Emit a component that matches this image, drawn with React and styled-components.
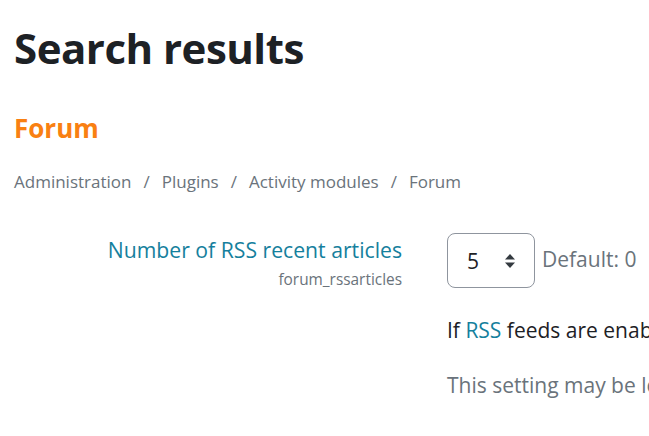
import styled, { createGlobalStyle } from "styled-components"

const GlobalStyle = createGlobalStyle`
* {
  margin: 0;
  padding: 0;
  box-sizing: border-box;
}
body {
  font-family: "Open Sans", "Noto Sans", sans-serif;
  background: #fff;
  color: #1d2125;
  overflow: hidden;
}
`

const Page = styled.div`
	padding: 22px 0 0 14px;
	width: 649px;
	height: 436px;
	overflow: hidden;
`

const Title = styled.h2`
	font-size: 42px;
	font-weight: 700;
	line-height: 52px;
	letter-spacing: -0.5px;
	color: #1d2125;
`

const Section = styled.h3`
	margin-top: 38px;
	font-size: 26px;
	font-weight: 700;
	line-height: 32px;
	color: #f98012;
`

const Crumbs = styled.nav`
	margin-top: 26px;
	display: flex;
	align-items: center;
	font-size: 17px;
	line-height: 24px;
	color: #6a737b;
`

const Sep = styled.span`
	padding: 0 12px;
`

const Setting = styled.div`
	margin-top: 39px;
	display: grid;
	grid-template-columns: 388px 1fr;
	column-gap: 45px;
	white-space: nowrap;
`

const LabelCol = styled.div`
	text-align: right;
	padding-top: 2px;
`

const Label = styled.div`
	font-size: 21.2px;
	line-height: 30px;
	color: #15809d;
`

const Key = styled.div`
	margin-top: 4px;
	font-size: 15.4px;
	line-height: 22px;
	color: #6a737b;
`

const ControlRow = styled.div`
	display: flex;
	align-items: center;
	gap: 7px;
`

const Select = styled.div`
	width: 88px;
	height: 55px;
	border: 1px solid #8f959e;
	border-radius: 8px;
	display: flex;
	align-items: center;
	justify-content: space-between;
	padding: 0 18px 0 19px;
	font-size: 21px;
	color: #1d2125;
`

const Default = styled.span`
	font-size: 21px;
	color: #6a737b;
	margin-top: -4px;
`

const Para = styled.p`
	margin-top: ${(p) => p.$top}px;
	font-size: 21px;
	line-height: 30px;
	color: ${(p) => p.$color || "#1d2125"};
`

const Link = styled.span`
	color: #15809d;
`

const Arrows = () => (
	<svg width="12" height="16" viewBox="0 0 12 16">
		<path d="M1 6.5 L6 1 L11 6.5 Z" fill="#343a40" />
		<path d="M1 9.5 L6 15 L11 9.5 Z" fill="#343a40" />
	</svg>
)

export default function App() {
	return (
		<Page>
			<GlobalStyle />
			<Title>Search results</Title>
			<Section>Forum</Section>
			<Crumbs>
				<span>Administration</span>
				<Sep>/</Sep>
				<span>Plugins</span>
				<Sep>/</Sep>
				<span>Activity modules</span>
				<Sep>/</Sep>
				<span>Forum</span>
			</Crumbs>
			<Setting>
				<LabelCol>
					<Label>Number of RSS recent articles</Label>
					<Key>forum_rssarticles</Key>
				</LabelCol>
				<div>
					<ControlRow>
						<Select>
							<span>5</span>
							<Arrows />
						</Select>
						<Default>Default: 0</Default>
					</ControlRow>
					<Para $top={27}>
						If <Link>RSS</Link> feeds are enabled, this setting determines the number of articles
					</Para>
					<Para $top={25} $color="#6a737b">
						This setting may be locked by the administrator
					</Para>
				</div>
			</Setting>
		</Page>
	)
}
